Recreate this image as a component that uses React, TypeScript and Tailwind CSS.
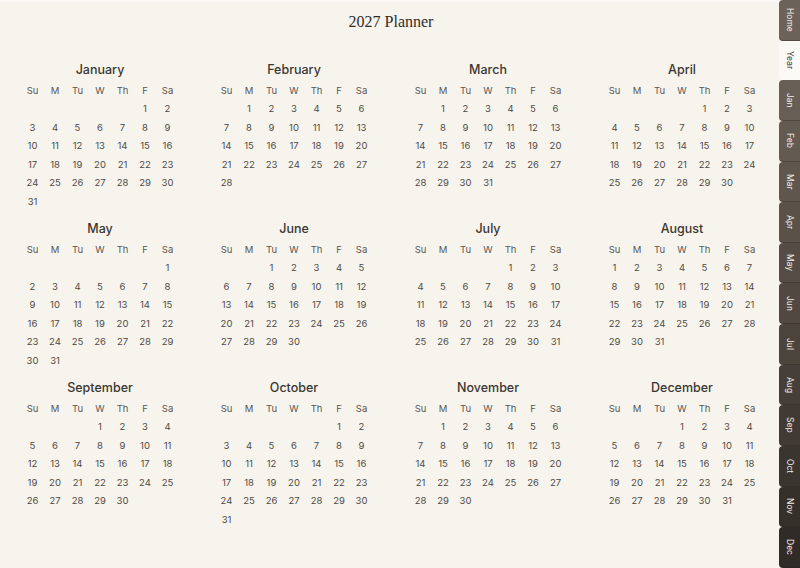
import React from "react"

const months = [
  "January", "February", "March", "April", "May", "June",
  "July", "August", "September", "October", "November", "December",
]

const weekdays = ["Su", "M", "Tu", "W", "Th", "F", "Sa"]

const tabs = [
  { label: "Home", bg: "bg-[#6b6259]" },
  { label: "Year", bg: "bg-[#fbf9f5]", active: true },
  { label: "Jan", bg: "bg-[#675e55]" },
  { label: "Feb", bg: "bg-[#635a51]" },
  { label: "Mar", bg: "bg-[#5f564d]" },
  { label: "Apr", bg: "bg-[#5a5249]" },
  { label: "May", bg: "bg-[#554d45]" },
  { label: "Jun", bg: "bg-[#504841]" },
  { label: "Jul", bg: "bg-[#4b443d]" },
  { label: "Aug", bg: "bg-[#463f39]" },
  { label: "Sep", bg: "bg-[#413a34]" },
  { label: "Oct", bg: "bg-[#3b3530]" },
  { label: "Nov", bg: "bg-[#36302b]" },
  { label: "Dec", bg: "bg-[#302b27]" },
]

function MonthCalendar({ index }: { index: number }) {
  const first = new Date(2027, index, 1).getDay()
  const total = new Date(2027, index + 1, 0).getDate()
  const cells: (number | null)[] = []
  for (let i = 0; i < first; i++) cells.push(null)
  for (let d = 1; d <= total; d++) cells.push(d)
  while (cells.length < 42) cells.push(null)

  return (
    <div className="flex flex-col items-center">
      <div className="h-[22px] flex items-center text-[12.5px] font-medium text-[#3a3632]">
        {months[index]}
      </div>
      <div className="grid grid-cols-[repeat(7,22.5px)] auto-rows-[18.5px] text-[9.5px] text-[#4f4a45]">
        {weekdays.map((w) => (
          <div key={w} className="flex items-center justify-center text-[#5a5550]">
            {w}
          </div>
        ))}
        {cells.map((d, i) => (
          <div key={i} className="flex items-center justify-center">
            {d ?? ""}
          </div>
        ))}
      </div>
    </div>
  )
}

export default function App() {
  return (
    <div
      className="w-[800px] h-[568px] flex bg-[#f7f4ee] overflow-hidden"
      style={{ fontFamily: "Inter, 'Noto Sans', sans-serif" }}
    >
      {/* Main */}
      <div className="w-[779px] flex flex-col pl-[3px] border-t-2 border-[#fbf9f5]">
        <div
          className="h-[57.5px] pt-[10px] text-center text-[16px] leading-[20px] text-[#2f2b27]"
          style={{ fontFamily: "'Liberation Serif', 'DejaVu Serif', serif" }}
        >
          2027 Planner
        </div>
        <div className="grid grid-cols-4 gap-y-[7.6px]">
          {months.map((m, i) => (
            <MonthCalendar key={m} index={i} />
          ))}
        </div>
      </div>

      {/* Side tabs */}
      <div className="w-[21px] flex flex-col">
        {tabs.map((t) => (
          <div
            key={t.label}
            className={`flex-1 flex items-center justify-center rounded-l-[4px] border-b border-[#2a2520]/40 ${t.bg} ${
              t.active ? "text-[#3a3632] border-b-0" : "text-[#f3efe9]"
            }`}
          >
            <span className="text-[8.5px] leading-none [writing-mode:vertical-rl]">{t.label}</span>
          </div>
        ))}
      </div>
    </div>
  )
}
